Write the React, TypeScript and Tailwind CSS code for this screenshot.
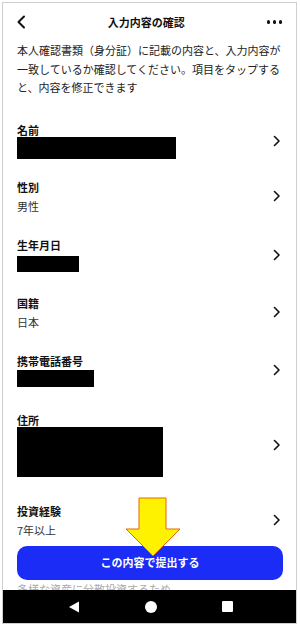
import React from "react";

type Row = {
  label: string;
  value?: string;
  bar?: string; // full class string for redaction block
  rowClass: string; // spacing above the row
};

const rows: Row[] = [
  { label: "名前", bar: "mt-0 w-[159px] h-[22px]", rowClass: "mt-[26px]" },
  { label: "性別", value: "男性", rowClass: "mt-[21px]" },
  { label: "生年月日", bar: "mt-[4px] w-[62px] h-[16px]", rowClass: "mt-[25px]" },
  { label: "国籍", value: "日本", rowClass: "mt-[24px]" },
  { label: "携帯電話番号", bar: "mt-[2px] w-[77px] h-[17px]", rowClass: "mt-[25px]" },
  { label: "住所", bar: "mt-0 w-[146px] h-[50px]", rowClass: "mt-[26px]" },
  { label: "投資経験", value: "7年以上", rowClass: "mt-[27px]" },
];

function Chevron() {
  return (
    <svg width="8" height="12" viewBox="0 0 8 12" className="shrink-0">
      <path d="M1.5 1.5 L6 6 L1.5 10.5" fill="none" stroke="#111" strokeWidth="1.6" strokeLinecap="round" strokeLinejoin="round" />
    </svg>
  );
}

function InfoRow({ row }: { row: Row }) {
  return (
    <div className={`flex items-center justify-between pr-[15px] ${row.rowClass}`}>
      <div className="flex flex-col">
        <div className="text-[11px] leading-[14px] font-bold text-[#111]">{row.label}</div>
        {row.value && <div className="mt-[5px] text-[11px] leading-[14px] text-[#333]">{row.value}</div>}
        {row.bar && <div className={`bg-black ${row.bar}`} />}
      </div>
      <Chevron />
    </div>
  );
}

export default function App() {
  return (
    <div className="w-[300px] h-[628px] bg-white pt-[2px] pl-[2px]" style={{ fontFamily: '"Noto Sans CJK JP", "Noto Sans", sans-serif' }}>
      <div className="relative w-[295px] h-[622px] border border-[#cfcfcf] flex flex-col overflow-hidden">
        {/* header */}
        <div className="h-[38px] shrink-0 flex items-center justify-between pl-[13px] pr-[14px]">
          <svg width="10" height="14" viewBox="0 0 10 14">
            <path d="M8 1.5 L2.5 7 L8 12.5" fill="none" stroke="#111" strokeWidth="2" strokeLinecap="round" strokeLinejoin="round" />
          </svg>
          <div className="text-[11px] font-bold text-[#111]">入力内容の確認</div>
          <div className="flex gap-[2.5px]">
            <span className="w-[3.5px] h-[3.5px] rounded-full bg-[#111]" />
            <span className="w-[3.5px] h-[3.5px] rounded-full bg-[#111]" />
            <span className="w-[3.5px] h-[3.5px] rounded-full bg-[#111]" />
          </div>
        </div>

        <div className="flex-1 pl-[14px] overflow-hidden">
          <p className="text-[11px] leading-[18.5px] text-[#222] pr-[10px]">
            本人確認書類（身分証）に記載の内容と、入力内容が一致しているか確認してください。項目をタップすると、内容を修正できます
          </p>

          {rows.map((r) => (
            <InfoRow key={r.label} row={r} />
          ))}

          <div className="mt-[9px] pr-[13px]">
            <button className="w-full h-[34px] rounded-[10px] bg-[#1a2cf5] text-white text-[11px] font-bold">
              この内容で提出する
            </button>
          </div>
          <div className="mt-[2px] text-[11px] leading-[14px] text-[#aaa]">多様な資産に分散投資するため</div>
        </div>

        {/* nav bar */}
        <div className="h-[33px] shrink-0 bg-black flex items-center justify-between pl-[65px] pr-[63px]">
          <svg width="12" height="12" viewBox="0 0 12 12">
            <path d="M11 0.5 L11 11.5 L1 6 Z" fill="#fff" />
          </svg>
          <span className="w-[12px] h-[12px] rounded-full bg-white" />
          <span className="w-[11px] h-[11px] rounded-[1px] bg-white" />
        </div>

        {/* yellow annotation arrow */}
        <svg className="absolute left-[119px] top-[493px]" width="62" height="62" viewBox="0 0 62 62">
          <path d="M14 1 L41 1 L41 32 L55 32 L28 59 L1 32 L14 32 Z" fill="#fff200" stroke="#e06a00" strokeWidth="1" strokeLinejoin="miter" transform="translate(3 1)" />
        </svg>
      </div>
    </div>
  );
}
